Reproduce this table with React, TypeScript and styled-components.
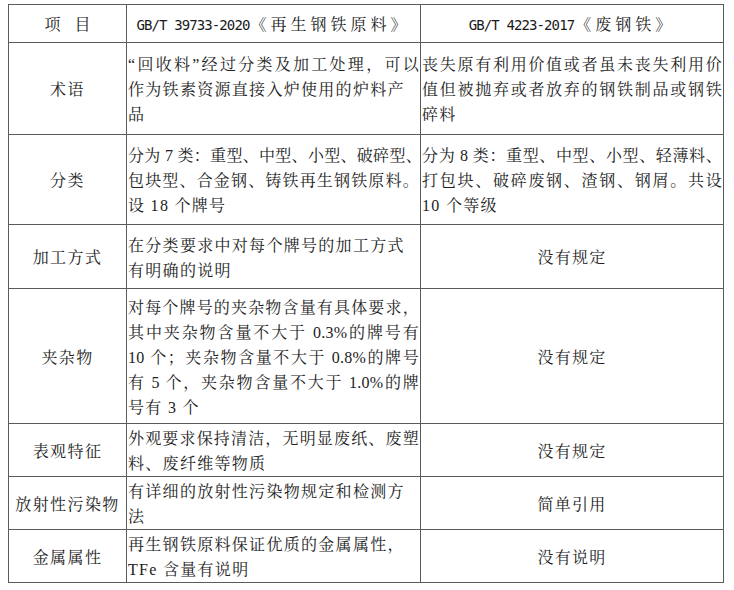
import React from 'react';
import styled, { createGlobalStyle } from 'styled-components';

const GlobalStyle = createGlobalStyle`
  html, body {
    margin: 0;
    padding: 0;
    background: #ffffff;
  }
  body {
    font-family: 'Liberation Serif', 'Noto Serif CJK SC', 'Noto Sans CJK SC', serif;
    color: #222222;
  }
`;

interface RowData {
  label: string;
  height: number;
  std: string[];
  scrap: string[];
  scrapCentered?: boolean;
}

const rows: RowData[] = [
  {
    label: '术语',
    height: 93,
    std: ['“回收料”经过分类及加工处理，可以', '作为铁素资源直接入炉使用的炉料产', '品'],
    scrap: ['丧失原有利用价值或者虽未丧失利用价', '值但被抛弃或者放弃的钢铁制品或钢铁', '碎料']
  },
  {
    label: '分类',
    height: 91,
    std: ['分为 7 类：重型、中型、小型、破碎型、', '包块型、合金钢、铸铁再生钢铁原料。', '设 18 个牌号'],
    scrap: ['分为 8 类：重型、中型、小型、轻薄料、', '打包块、破碎废钢、渣钢、钢屑。共设', '10 个等级']
  },
  {
    label: '加工方式',
    height: 65,
    std: ['在分类要求中对每个牌号的加工方式', '有明确的说明'],
    scrap: ['没有规定'],
    scrapCentered: true
  },
  {
    label: '夹杂物',
    height: 136,
    std: [
      '对每个牌号的夹杂物含量有具体要求，',
      '其中夹杂物含量不大于 0.3%的牌号有',
      '10 个；夹杂物含量不大于 0.8%的牌号',
      '有 5 个，夹杂物含量不大于 1.0%的牌',
      '号有 3 个'
    ],
    scrap: ['没有规定'],
    scrapCentered: true
  },
  {
    label: '表观特征',
    height: 52,
    std: ['外观要求保持清洁，无明显废纸、废塑', '料、废纤维等物质'],
    scrap: ['没有规定'],
    scrapCentered: true
  },
  {
    label: '放射性污染物',
    height: 51,
    std: ['有详细的放射性污染物规定和检测方', '法'],
    scrap: ['简单引用'],
    scrapCentered: true
  },
  {
    label: '金属属性',
    height: 53,
    std: ['再生钢铁原料保证优质的金属属性，', 'TFe 含量有说明'],
    scrap: ['没有说明'],
    scrapCentered: true
  }
];

const Page = styled.div`
  padding: 4px 0 0 8px;
`;

const Table = styled.table`
  border-collapse: collapse;
  table-layout: fixed;
  width: 715px;
`;

const HeadCell = styled.th`
  border: 1px solid #5a5a5a;
  height: 37px;
  padding: 0;
  font-weight: normal;
  text-align: center;
  vertical-align: middle;
  white-space: nowrap;
  color: #1a1a1a;
  font-family: 'DejaVu Sans Mono', 'Noto Serif CJK SC', 'Noto Sans CJK SC', monospace;
  font-size: 14px;
  letter-spacing: -0.9px;
`;

const Wide = styled.span`
  font-family: 'Noto Serif CJK SC', 'Noto Sans CJK SC', serif;
  font-size: 16px;
  letter-spacing: 4px;
  margin-left: 1px;
`;

const Spaced = styled.span`
  font-family: 'Noto Serif CJK SC', 'Noto Sans CJK SC', serif;
  font-size: 16px;
  letter-spacing: 14px;
  margin-right: -14px;
`;

const Row = styled.tr<{ $h: number }>`
  height: ${(p) => p.$h - 1}px;
`;

const LabelCell = styled.td`
  border: 1px solid #5a5a5a;
  padding: 0;
  text-align: center;
  vertical-align: middle;
  font-size: 16px;
  letter-spacing: 1.4px;
  white-space: nowrap;
`;

const TextCell = styled.td<{ $center?: boolean }>`
  border: 1px solid #5a5a5a;
  padding: 2px 1px 0 1px;
  vertical-align: middle;
  text-align: ${(p) => (p.$center ? 'center' : 'left')};
  font-size: 16px;
  letter-spacing: 1.3px;
`;

const Line = styled.div<{ $full: boolean }>`
  line-height: 25px;
  white-space: nowrap;
  letter-spacing: ${(p) => (p.$full ? '0.3px' : 'inherit')};
  text-align: ${(p) => (p.$full ? 'justify' : 'inherit')};
  text-align-last: ${(p) => (p.$full ? 'justify' : 'auto')};
`;

const Lines = ({ lines, center }: { lines: string[]; center?: boolean }) => (
  <>
    {lines.map((l, i) => (
      <Line key={i} $full={!center && i < lines.length - 1 && l.length >= 17}>
        {l}
      </Line>
    ))}
  </>
);

const App = () => {
  return (
    <Page>
      <GlobalStyle />
      <Table>
        <colgroup>
          <col style={{ width: 118 }} />
          <col style={{ width: 294 }} />
          <col style={{ width: 303 }} />
        </colgroup>
        <thead>
          <tr>
            <HeadCell>
              <Spaced>项目</Spaced>
            </HeadCell>
            <HeadCell>
              GB/T 39733-2020<Wide>《再生钢铁原料》</Wide>
            </HeadCell>
            <HeadCell>
              GB/T 4223-2017<Wide>《废钢铁》</Wide>
            </HeadCell>
          </tr>
        </thead>
        <tbody>
          {rows.map((r) => (
            <Row key={r.label} $h={r.height}>
              <LabelCell>{r.label}</LabelCell>
              <TextCell>
                <Lines lines={r.std} />
              </TextCell>
              <TextCell $center={r.scrapCentered}>
                <Lines lines={r.scrap} center={r.scrapCentered} />
              </TextCell>
            </Row>
          ))}
        </tbody>
      </Table>
    </Page>
  );
};

export default App;
